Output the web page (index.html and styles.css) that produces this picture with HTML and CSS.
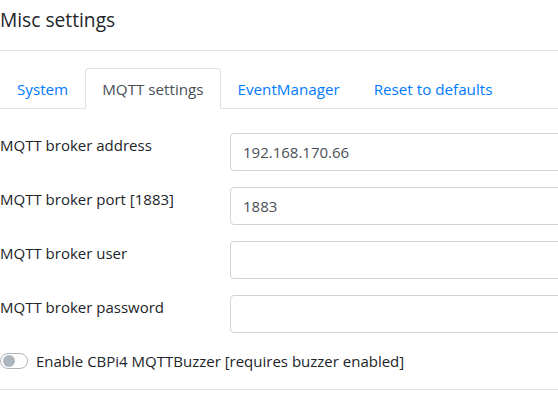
FILE: index.html
```html
<html>
<head>
<title>Misc settings</title>
<meta name="viewport" content="width=device-width, initial-scale=1">
<link rel="stylesheet" href="styles.css">
</head>
<body>
<div class="modal">
  <div class="modal-header">
    <h5 class="modal-title">Misc settings</h5>
  </div>
  <div class="modal-body">
    <ul class="nav-tabs">
      <li><a class="nav-link" href="#">System</a></li>
      <li><a class="nav-link active" href="#">MQTT settings</a></li>
      <li><a class="nav-link" href="#">EventManager</a></li>
      <li><a class="nav-link" href="#">Reset to defaults</a></li>
    </ul>
    <div class="tab-content">
      <div class="form-row">
        <label>MQTT broker address</label>
        <input class="form-control" type="text" value="192.168.170.66">
      </div>
      <div class="form-row">
        <label>MQTT broker port [1883]</label>
        <input class="form-control" type="text" value="1883">
      </div>
      <div class="form-row">
        <label>MQTT broker user</label>
        <input class="form-control" type="text" value="">
      </div>
      <div class="form-row">
        <label>MQTT broker password</label>
        <input class="form-control" type="password" value="">
      </div>
      <div class="switch">
        <span class="switch-track"></span>
        <span class="switch-label">Enable CBPi4 MQTTBuzzer [requires buzzer enabled]</span>
      </div>
    </div>
  </div>
  <div class="modal-footer"></div>
</div>
</body>
</html>
```

FILE: styles.css
```css
body {
  margin: 0;
  font-family: "Open Sans", "Noto Sans", sans-serif;
  font-size: 15px;
  line-height: 24px;
  color: #212529;
  background: #fff;
}

.modal {
  width: 100%;
  overflow: hidden;
}

.modal-header {
  height: 50px;
  border-bottom: 1px solid #dee2e6;
  display: flex;
  align-items: center;
}

.modal-title {
  margin: 0;
  font-size: 19.2px;
  font-weight: 400;
  line-height: 30px;
  margin-top: -10px;
}

.modal-body {
  padding-top: 17px;
}

.nav-tabs {
  display: flex;
  list-style: none;
  margin: 0;
  padding: 0;
  border-bottom: 1px solid #dee2e6;
}

.nav-link {
  display: block;
  padding: 8px 16px 7px;
  margin-bottom: -1px;
  border: 1px solid transparent;
  border-radius: 4px 4px 0 0;
  font-size: 15.2px;
  color: #007bff;
  text-decoration: none;
}

.nav-link.active {
  color: #495057;
  background: #fff;
  border-color: #dee2e6 #dee2e6 #fff;
}

.tab-content {
  padding-top: 24px;
}

.form-row {
  display: grid;
  grid-template-columns: 230px 1fr;
  margin-bottom: 16px;
}

.form-row label {
  line-height: 24px;
}

.form-control {
  height: 38px;
  padding: 6px 12px;
  font: inherit;
  color: #495057;
  border: 1px solid #ced4da;
  border-radius: 4px;
  box-sizing: border-box;
  width: calc(100% + 20px);
}

.switch {
  display: flex;
  align-items: center;
  height: 24px;
  padding-bottom: 16px;
  border-bottom: 1px solid #dee2e6;
}

.switch-track {
  width: 26px;
  height: 14px;
  border: 1px solid #adb5bd;
  border-radius: 8px;
  margin-right: 8px;
  position: relative;
}

.switch-track::after {
  content: '';
  position: absolute;
  left: 2px;
  top: 1px;
  width: 12px;
  height: 12px;
  border-radius: 50%;
  background: #adb5bd;
}
```
